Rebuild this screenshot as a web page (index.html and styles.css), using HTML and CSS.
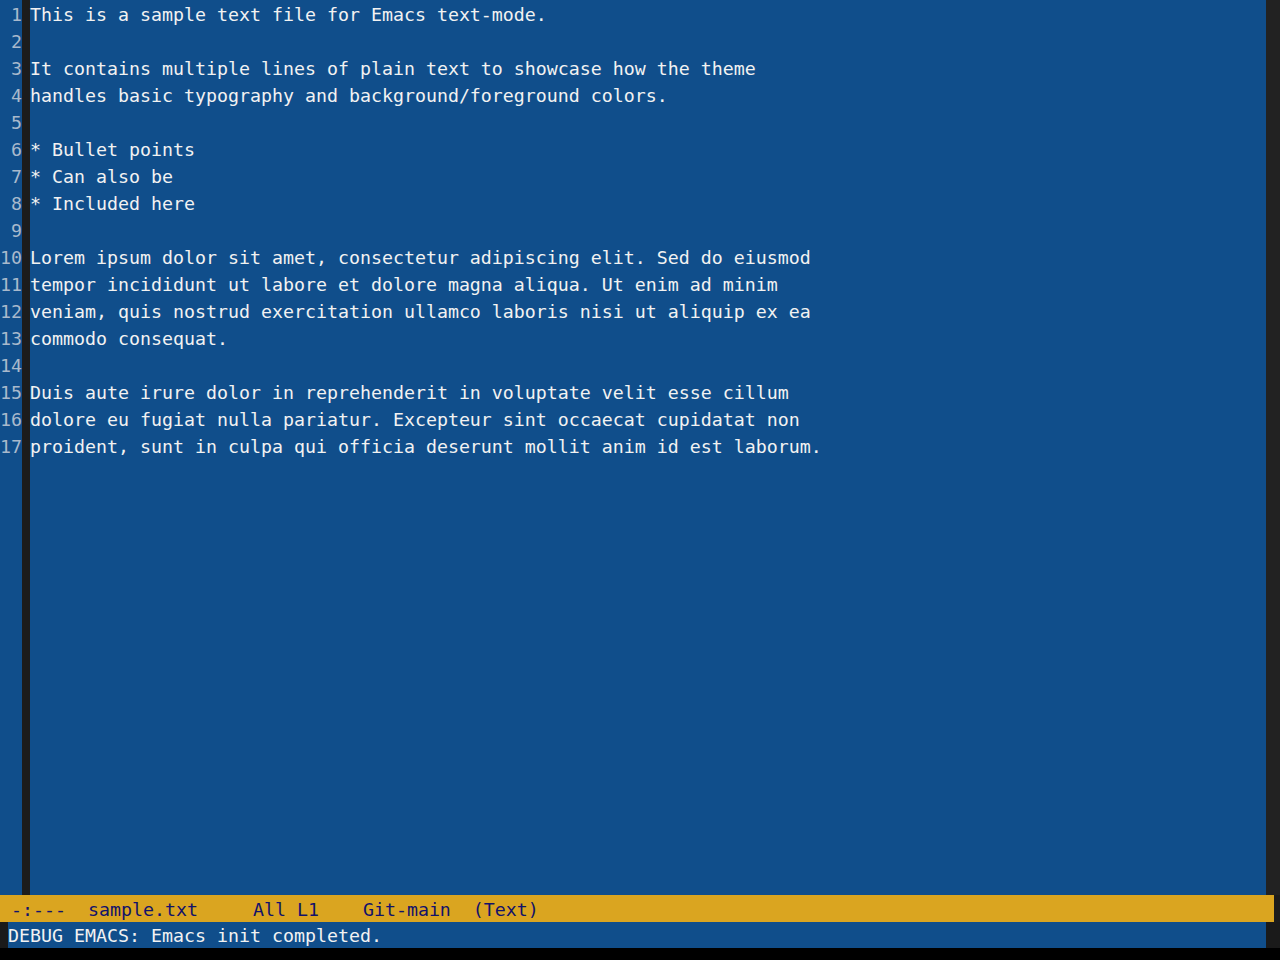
FILE: index.html
```html
<!DOCTYPE html>
<html lang="en">
<head>
    <meta charset="UTF-8">
    <title>sample.txt - Emacs</title>
    <link rel="stylesheet" href="styles.css">
</head>
<body>
    <div class="frame">
        <div class="window">
            <div class="gutter">
                <div class="ln">1</div>
                <div class="ln">2</div>
                <div class="ln">3</div>
                <div class="ln">4</div>
                <div class="ln">5</div>
                <div class="ln">6</div>
                <div class="ln">7</div>
                <div class="ln">8</div>
                <div class="ln">9</div>
                <div class="ln">10</div>
                <div class="ln">11</div>
                <div class="ln">12</div>
                <div class="ln">13</div>
                <div class="ln">14</div>
                <div class="ln">15</div>
                <div class="ln">16</div>
                <div class="ln">17</div>
            </div>
            <div class="fringe"></div>
            <div class="buffer">
                <div class="line">This is a sample text file for Emacs text-mode.</div>
                <div class="line"></div>
                <div class="line">It contains multiple lines of plain text to showcase how the theme</div>
                <div class="line">handles basic typography and background/foreground colors.</div>
                <div class="line"></div>
                <div class="line">* Bullet points</div>
                <div class="line">* Can also be</div>
                <div class="line">* Included here</div>
                <div class="line"></div>
                <div class="line">Lorem ipsum dolor sit amet, consectetur adipiscing elit. Sed do eiusmod</div>
                <div class="line">tempor incididunt ut labore et dolore magna aliqua. Ut enim ad minim</div>
                <div class="line">veniam, quis nostrud exercitation ullamco laboris nisi ut aliquip ex ea</div>
                <div class="line">commodo consequat.</div>
                <div class="line"></div>
                <div class="line">Duis aute irure dolor in reprehenderit in voluptate velit esse cillum</div>
                <div class="line">dolore eu fugiat nulla pariatur. Excepteur sint occaecat cupidatat non</div>
                <div class="line">proident, sunt in culpa qui officia deserunt mollit anim id est laborum.</div>
            </div>
            <div class="fringe fringe-right"></div>
        </div>
        <div class="modeline-row">
            <div class="modeline"> -:---  sample.txt     All L1    Git-main  (Text)</div>
        </div>
        <div class="echo-row">
            <div class="echo">DEBUG EMACS: Emacs init completed.</div>
        </div>
    </div>
</body>
</html>
```

FILE: styles.css
```css
body {
    margin: 0;
    background: #000;
    font-family: "DejaVu Sans Mono", monospace;
    font-size: 18.27px;
    line-height: 27px;
}
.frame {
    width: 1280px;
    height: 960px;
    display: flex;
    flex-direction: column;
}
.window {
    height: 895px;
    display: flex;
    background: #104e8b;
}
.gutter {
    width: 22px;
    padding-top: 1px;
    color: #a9b9cc;
    text-align: right;
}
.ln, .line {
    height: 27px;
    white-space: pre;
}
.fringe {
    width: 8px;
    background: #1c1c1c;
}
.fringe-right {
    width: 14px;
    background: #222;
}
.buffer {
    flex: 1;
    padding-top: 1px;
    color: #f2f2f2;
}
.modeline-row {
    height: 27px;
    display: flex;
    background: #1c1c1c;
}
.modeline {
    width: 1274px;
    padding-top: 1px;
    background: #daa520;
    color: #12126a;
    white-space: pre;
}
.echo-row {
    height: 26px;
    display: flex;
    padding-left: 8px;
    padding-right: 14px;
    background: #1a1a1a;
}
.echo {
    flex: 1;
    padding-top: 2px;
    background: #104e8b;
    color: #f2f2f2;
    white-space: pre;
    line-height: 24px;
}
```
